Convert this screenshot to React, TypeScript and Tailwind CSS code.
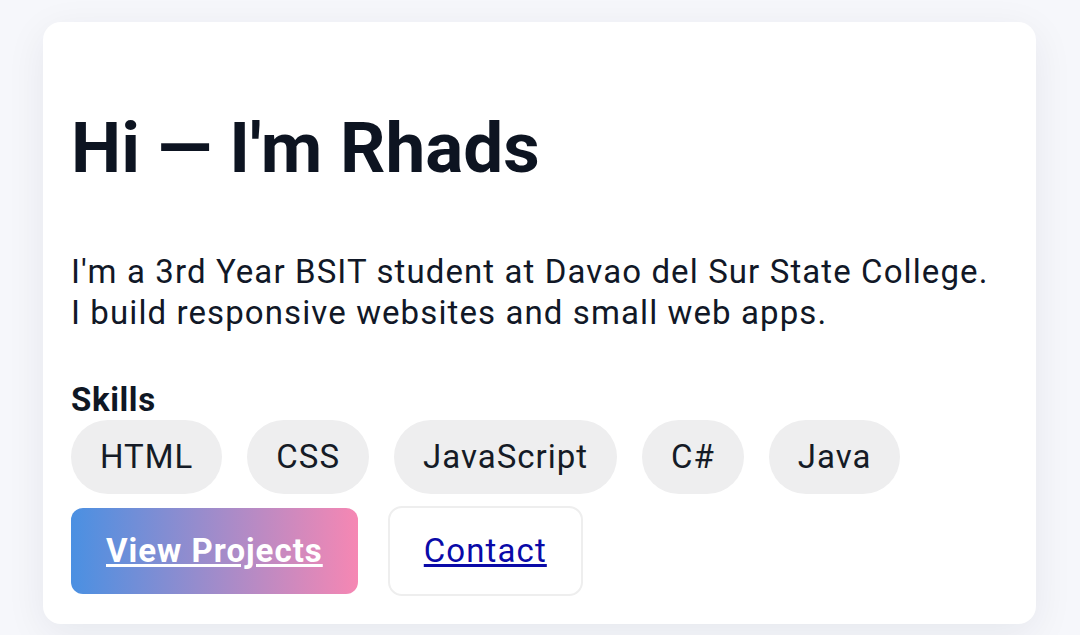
const skills = ["HTML", "CSS", "JavaScript", "C#", "Java"];

export default function App() {
  return (
    <div
      className="min-h-[635px] w-[1080px] bg-[#f6f7fb] pt-[22px] pl-[43px]"
      style={{ fontFamily: "Roboto, 'Noto Sans', sans-serif" }}
    >
      <div className="w-[993px] h-[602px] rounded-[18px] bg-white shadow-[0_10px_40px_rgba(20,30,60,0.07)] px-[28px] pt-[83px] text-[#0f1724]">
        <h1 className="text-[71px] leading-[86px] font-bold text-[#0d1421]">Hi — I'm Rhads</h1>

        <p className="mt-[60px] text-[33px] leading-[41px] tracking-[1.1px] text-[#111827]">
          I'm a 3rd Year BSIT student at Davao del Sur State College.
          <br />
          I build responsive websites and small web apps.
        </p>

        <h2 className="mt-[49px] text-[33px] leading-[36px] tracking-[0.6px] font-bold">Skills</h2>

        <div className="mt-[2px] flex gap-[25px]">
          {skills.map((s) => (
            <span
              key={s}
              className="h-[74px] px-[29px] flex items-center rounded-full bg-[#eeeeef] text-[33px] tracking-[1px] text-[#151b26]"
            >
              {s}
            </span>
          ))}
        </div>

        <div className="mt-[12px] flex items-center gap-[30px]">
          <a
            href="#projects"
            className="h-[86px] px-[35px] flex items-center rounded-[12px] bg-[linear-gradient(90deg,#4a90e2,#f687b3)] text-white text-[33px] tracking-[1px] font-bold underline"
          >
            View Projects
          </a>
          <a
            href="#contact"
            className="h-[90px] px-[34px] flex items-center rounded-[14px] border-2 border-[#eeeeee] text-[#0a0aa8] text-[33px] tracking-[1.1px] underline"
          >
            Contact
          </a>
        </div>
      </div>
    </div>
  );
}
